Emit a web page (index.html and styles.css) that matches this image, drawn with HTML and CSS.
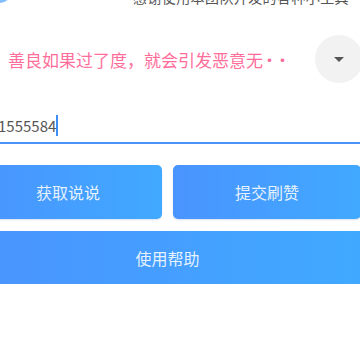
FILE: index.html
```html
<!DOCTYPE html>
<html lang="zh">
<head>
<meta charset="utf-8">
<link rel="stylesheet" href="styles.css">
</head>
<body>
<div class="page">
  <div class="header">
    <span class="logo"></span>
    <span class="notice">感谢使用本团队开发的各种小工具</span>
  </div>
  <div class="select-row">
    <span class="quote">善良如果过了度，就会引发恶意无<span class="dots">··</span></span>
    <span class="drop"><span class="tri"></span></span>
  </div>
  <div class="input-row">
    <span class="value">1555584</span><span class="caret"></span>
  </div>
  <div class="btn-row">
    <div class="btn">获取说说</div>
    <div class="btn">提交刷赞</div>
  </div>
  <div class="btn wide">使用帮助</div>
</div>
</body>
</html>
```
FILE: styles.css
```css
html, body {
  margin: 0;
  padding: 0;
  background: #fff;
  overflow: hidden;
}
body {
  font-family: "Noto Sans CJK SC", "Noto Sans", sans-serif;
}
.page {
  margin-left: -26px;
  width: 387px;
}
.header {
  display: flex;
  align-items: center;
  height: 24px;
  margin-top: -15px;
}
.logo {
  align-self: flex-start;
  width: 22px;
  height: 22px;
  border-radius: 50%;
  background: #5aa8f5;
  margin-left: 15px;
  margin-top: -4px;
  opacity: 0.75;
}
.notice {
  margin-left: 122px;
  font-size: 14px;
  color: #555;
  white-space: nowrap;
  letter-spacing: 0.4px;
}
.select-row {
  display: flex;
  align-items: center;
  justify-content: space-between;
  margin-top: 26px;
  height: 48px;
}
.quote {
  margin-left: 34px;
  font-size: 17px;
  color: #ff6e9b;
  white-space: nowrap;
}
.dots {
  letter-spacing: -4px;
  margin-left: -2px;
}
.drop {
  width: 48px;
  height: 48px;
  border-radius: 50%;
  background: #f2f2f2;
  display: flex;
  align-items: center;
  justify-content: center;
  margin-right: -2px;
}
.tri {
  width: 0;
  height: 0;
  border-left: 5px solid transparent;
  border-right: 5px solid transparent;
  border-top: 5px solid #555;
}
.input-row {
  box-sizing: border-box;
  display: flex;
  align-items: center;
  margin-top: 29px;
  height: 32px;
  padding-bottom: 4px;
  border-bottom: 2px solid #4a92f7;
}
.value {
  margin-left: 24px;
  font-size: 15px;
  color: #555;
}
.caret {
  width: 2px;
  height: 21px;
  background: #3d8ef5;
}
.btn-row {
  display: flex;
  gap: 11px;
  margin-top: 21px;
}
.btn {
  flex: 1;
  height: 54px;
  border-radius: 5px;
  background: linear-gradient(90deg, #4a94ff, #40a9ff);
  color: rgba(255, 255, 255, 0.88);
  font-size: 16px;
  display: flex;
  align-items: center;
  justify-content: center;
  box-shadow: 0 1px 2px rgba(0, 60, 140, 0.15);
}
.wide {
  margin-top: 12px;
  height: 53px;
  border-radius: 0;
}
```
